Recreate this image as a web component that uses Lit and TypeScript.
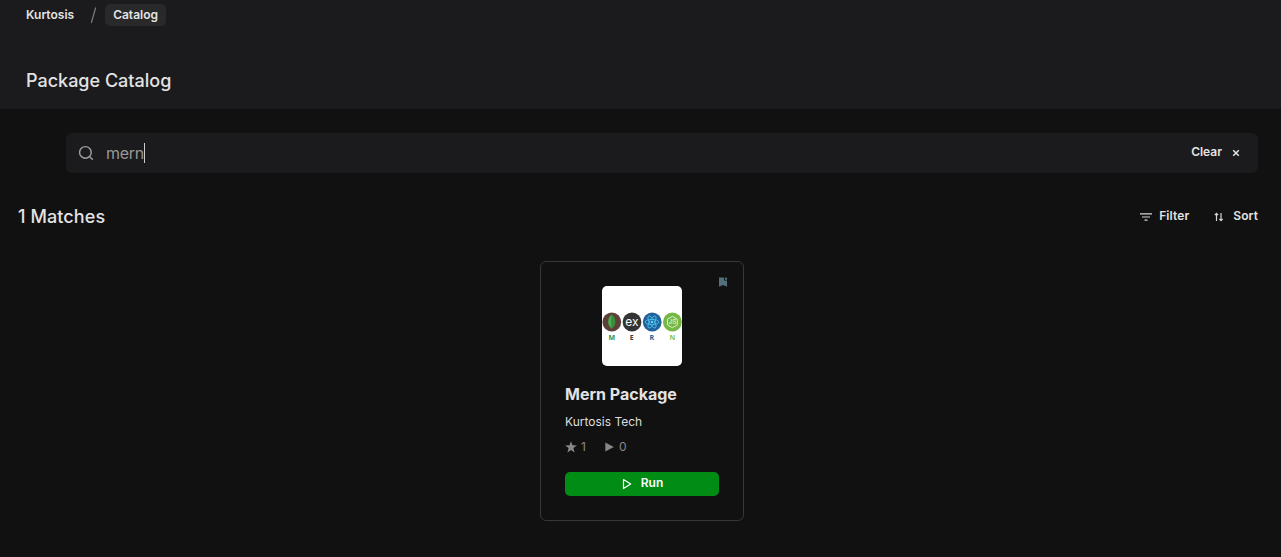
import { LitElement, html, css, svg } from "lit";
import { customElement, property } from "lit/decorators.js";

@customElement("mern-logo")
class MernLogo extends LitElement {
  static styles = css`
    :host { display: block; width: 80px; height: 80px; }
    svg { display: block; border-radius: 5px; background: #fff; }
    text { font-family: "Open Sans", sans-serif; font-weight: 700; font-size: 7px; text-anchor: middle; }
    .ex { font-family: Inter, sans-serif; font-weight: 400; font-size: 12px; fill: #fff; letter-spacing: -0.1px; }
    .js { font-family: Inter, sans-serif; font-weight: 500; font-size: 6.500px; fill: #e4f5d5; }
  `;
  render() {
    return html`<svg width="80" height="80" viewBox="0 0 80 80">
      <circle cx="9.8" cy="36" r="9.4" fill="#5d4037" />
      <path d="M9.8 28.2C6.900 31 6.200 33.500 6.200 36c0 3 1.600 5.200 3.200 6.300l.3 1.500V28.200z" fill="#4caf50" />
      <path d="M9.700 28.200C12.700 31 13.400 33.500 13.400 36c0 3-1.600 5.200-3.200 6.300l-.5 1.500z" fill="#388e3c" />
      <circle cx="30" cy="36" r="9.4" fill="#343434" />
      <text class="ex" x="29.900" y="39.900">ex</text>
      <circle cx="50.200" cy="36" r="9.400" fill="#24609a" />
      <g fill="none" stroke="#45c3ee" stroke-width="0.850">
        ${[0, 60, 120].map((a) => svg`<ellipse cx="50" cy="36" rx="6.800" ry="2.600" transform=${`rotate(${a} 50 36)`} />`)}
      </g>
      <circle cx="50" cy="36" r="1.300" fill="#62d5fa" />
      <circle cx="70.400" cy="36" r="9.400" fill="#75b843" />
      <path d="M70.400 30.300l4.900 2.850v5.700l-4.900 2.850-4.900-2.850v-5.700z" fill="none" stroke="#e4f5d5" stroke-width="0.900" />
      <text class="js" x="70.400" y="38.300">JS</text>
      <text x="9.700" y="53.800" fill="#388e3c">M</text>
      <text x="29.800" y="53.800" fill="#3c3c3c">E</text>
      <text x="49.900" y="53.800" fill="#24609a">R</text>
      <text x="70.400" y="53.800" fill="#80c553">N</text>
    </svg>`;
  }
}

@customElement("package-card")
class PackageCard extends LitElement {
  @property() name = "";
  @property() author = "";
  @property({ type: Number }) stars = 0;
  @property({ type: Number }) runs = 0;

  static styles = css`
    :host {
      display: flex; flex-direction: column; position: relative; box-sizing: border-box;
      width: 204px; height: 260px; padding: 24px; border: 1px solid #373737; border-radius: 6px;
    }
    svg { display: block; flex: none; }
    .save { position: absolute; right: 15px; top: 15px; }
    mern-logo { align-self: center; }
    .name { margin: 16px 0 0; font-size: 16px; line-height: 24px; font-weight: 700; color: #e3e3e3; white-space: nowrap; }
    .author { margin-top: 8px; font-size: 12px; line-height: 16px; color: #dedede; }
    .stats { display: flex; align-items: center; margin-top: 9px; height: 16px; font-size: 12px; line-height: 14px; color: #888; }
    .stats svg { margin-right: 4px; }
    .stats .runs { margin-left: 19px; margin-right: 5px; }
    .run {
      display: flex; align-items: center; justify-content: center; gap: 8px; margin-top: 17px; padding: 0;
      height: 24px; border: 0; border-radius: 5px; background: #008c15; color: #fff;
      font: 600 12px/22px Inter, sans-serif;
    }
    .run span { padding-bottom: 2px; }
  `;
  render() {
    return html`
      <svg class="save" width="10" height="10" viewBox="0 0 10 10" fill="#536f7d">
        <path d="M1 .5h5v3h3v6.300L5 8 1 9.800z" /><circle cx="8" cy="1.800" r="1.200" />
      </svg>
      <mern-logo></mern-logo>
      <div class="name">${this.name}</div>
      <div class="author">${this.author}</div>
      <div class="stats">
        <svg width="12" height="12" viewBox="0 0 12 12" fill="#888"><path d="M6 .3l1.500 3.900 4.300.2-3.400 2.700 1.200 4.300L6 9 2.400 11.400l1.200-4.300L.2 4.400l4.300-.2z" /></svg>
        <span>${this.stars}</span>
        <svg class="runs" width="9" height="10" viewBox="0 0 9 10" fill="#888"><path d="M.3 .5l8.500 4.500-8.500 4.500z" /></svg>
        <span>${this.runs}</span>
      </div>
      <button class="run">
        <svg width="12" height="12" viewBox="0 0 12 12" fill="none" stroke="#fff" stroke-width="1.200" stroke-linejoin="round"><path d="M2.500 1.500l7.200 4.500-7.200 4.500z" /></svg>
        <span>Run</span>
      </button>`;
  }
}

@customElement("app-root")
class AppRoot extends LitElement {
  static styles = css`
    :host {
      display: block; height: 557px; overflow: hidden; background: #111; color: #e3e3e3;
      font-family: Inter, sans-serif; font-size: 12px;
    }
    svg { display: block; flex: none; }
    header { height: 109px; background: #1b1b1d; box-sizing: border-box; padding: 4px 26px 0; }
    nav { display: flex; align-items: center; height: 22px; font-weight: 600; line-height: 20px; }
    nav > span:first-child { padding-bottom: 1px; }
    .slash { margin: 0 8px 0 16px; }
    .current { padding: 0 8px; line-height: 22px; border-radius: 5px; background: #292929; }
    h1, h2 { margin: 0; font-size: 18px; line-height: 28px; font-weight: 500; letter-spacing: 0; }
    h1 { margin-top: 41px; }
    h2 { letter-spacing: 0.1px; }
    main { padding: 24px 23px 0 18px; }
    .search {
      display: flex; align-items: center; height: 40px; margin-left: 48px; padding: 0 18px 0 12px;
      box-sizing: border-box; border-radius: 6px; background: #1b1b1d;
    }
    .query { margin-left: 12px; font-size: 16px; line-height: 20px; letter-spacing: -0.25px; color: #979797; }
    .caret { width: 1px; height: 20px; background: #ccc; }
    .action { display: flex; align-items: center; font-weight: 600; letter-spacing: 0; line-height: 16px; }
    .clear { margin-left: auto; gap: 10px; }
    .clear span { margin-top: -2px; }
    .bar { display: flex; align-items: center; justify-content: space-between; height: 28px; margin-top: 30px; }
    .tools { display: flex; gap: 25px; }
    .tools .action { gap: 7px; letter-spacing: 0.1px; }
    .tools .action + .action { gap: 9px; }
    .tools span { margin-top: -2px; }
    .results { display: flex; justify-content: center; margin-top: 30px; padding-left: 8px; }
  `;
  render() {
    return html`
      <header>
        <nav>
          <span>Kurtosis</span>
          <svg class="slash" width="7" height="18" viewBox="0 0 7 18" stroke="#7b7b7b" stroke-width="1.200"><path d="M5.700 1.500L1.300 17" /></svg>
          <span class="current">Catalog</span>
        </nav>
        <h1>Package Catalog</h1>
      </header>
      <main>
        <div class="search">
          <svg width="16" height="16" viewBox="0 0 16 16" fill="none" stroke="#a0a0a0" stroke-width="1.400" stroke-linecap="round"><circle cx="7.400" cy="7.400" r="5.800" /><path d="M11.700 11.700l2.600 2.600" /></svg>
          <span class="query">mern</span><i class="caret"></i>
          <div class="action clear"><span>Clear</span>
            <svg width="8" height="8" viewBox="0 0 8 8" stroke="#e3e3e3" stroke-width="1.500"><path d="M1.200 1.200l5.600 5.600M6.800 1.200L1.200 6.800" /></svg>
          </div>
        </div>
        <div class="bar">
          <h2>1 Matches</h2>
          <div class="tools">
            <div class="action">
              <svg width="12" height="8" viewBox="0 0 12 8" fill="#d5d5d5"><path d="M0 .3h12v1.200H0zM2 3.400h8v1.200H2zM4.500 6.500h3v1.200h-3z" /></svg>
              <span>Filter</span>
            </div>
            <div class="action">
              <svg width="10" height="10" viewBox="0 0 10 10" fill="none" stroke="#d5d5d5" stroke-width="1.200"><path d="M2.500 9V1.500M.8 3.200l1.700-1.900 1.700 1.900M7 1v7.500M5.300 6.800L7 8.700l1.700-1.900" /></svg>
              <span>Sort</span>
            </div>
          </div>
        </div>
        <div class="results">
          <package-card name="Mern Package" author="Kurtosis Tech" stars="1" runs="0"></package-card>
        </div>
      </main>`;
  }
}
